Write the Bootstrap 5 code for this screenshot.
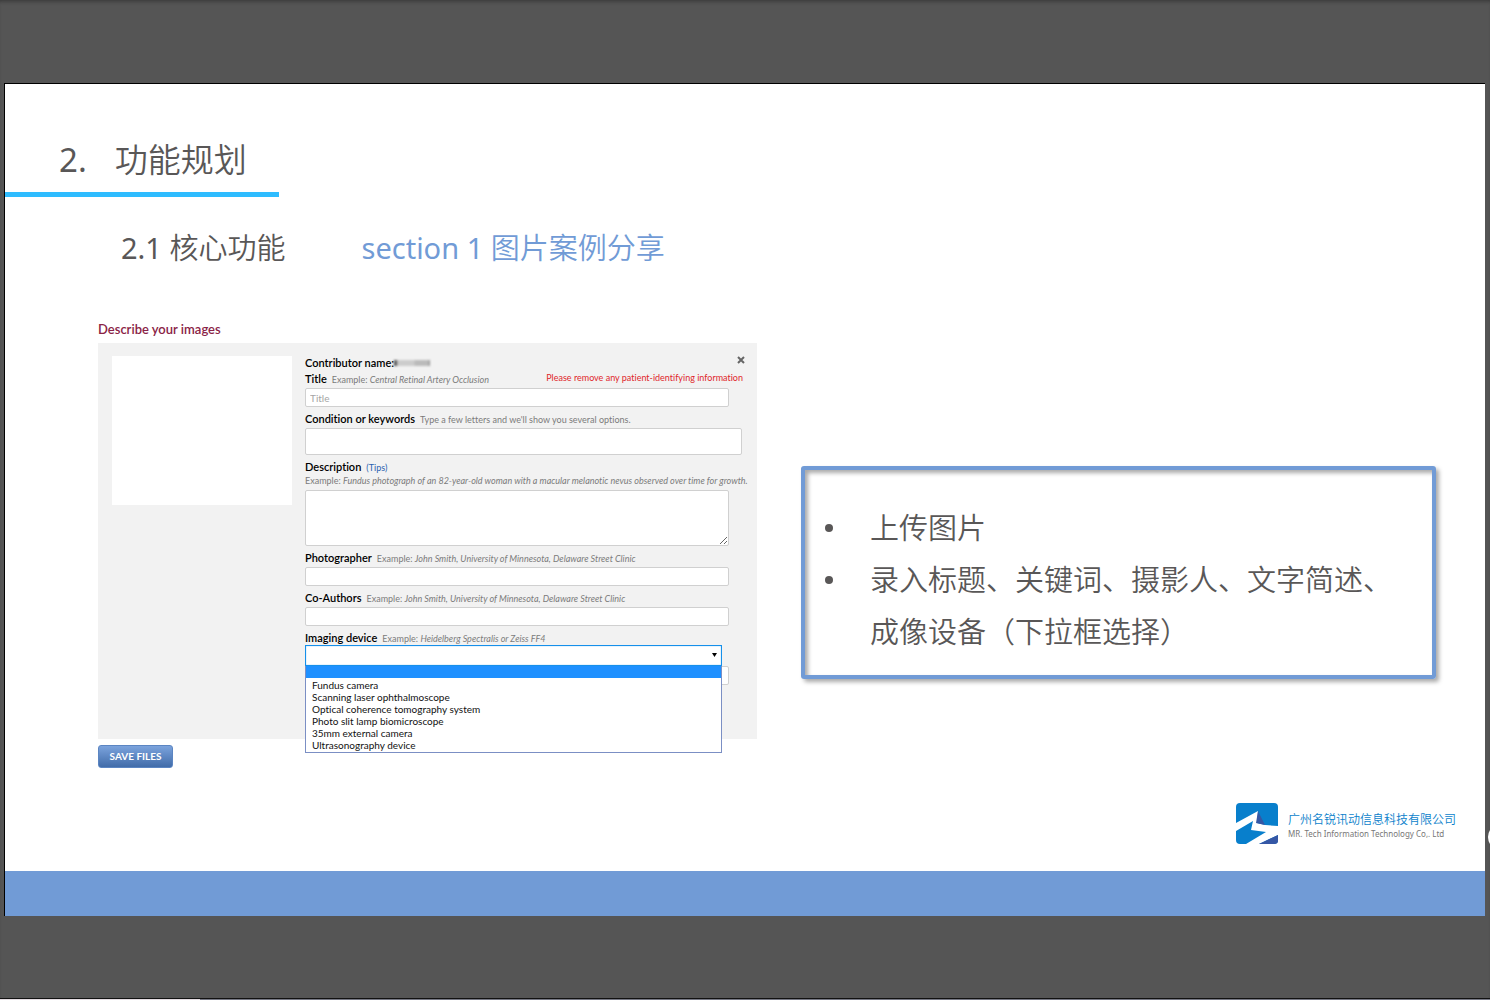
<!DOCTYPE html>
<html lang="zh-CN">
<head>
<meta charset="utf-8">
<meta name="viewport" content="width=device-width, initial-scale=1">
<title>功能规划</title>
<link rel="stylesheet" href="https://cdn.jsdelivr.net/npm/bootstrap@5.3.0/dist/css/bootstrap.min.css">
<style>
  body { background: #555; color: #595757; font-family: "Noto Sans", "Noto Sans CJK SC", sans-serif; font-weight: 350; box-shadow: inset 0 4px 4px -3px #333; }
  .stage { padding: 83px 5px 0 4px; }
  .slide { background: #fff; border-left: 1px solid #000; border-top: 1px solid #000; }
  .slide-head { padding-top: 52px; }
  .slide-title { display: inline-flex; gap: 28px; width: 274px; padding-left: 54px; border-bottom: 5px solid #2ebcff; font-size: 33px; line-height: 48px; padding-bottom: 8px; font-weight: 350; }
  .slide-sub { gap: 76px; padding: 29px 0 0 116px; }
  .slide-sub h2 { font-size: 29px; line-height: 44px; font-weight: 350; }
  .latin { font-weight: 400; }
  .tone-blue { color: #719bd6; }
  .content-row { gap: 44px; padding: 50px 49px 0 93px; }
  .upload { flex: 0 1 659px; min-width: 0; font-family: Lato, sans-serif; font-weight: 400; font-variant-ligatures: none; }
  .upload-title { color: #8a2346; font-size: 13px; line-height: 18px; font-weight: 600; padding-bottom: 5px; }
  .upload-panel { background: #f2f2f2; height: 396px; padding: 13px 14px 0 14px; gap: 13px; }
  .thumb { width: 180px; height: 149px; flex: none; }
  .fields { flex: 1 1 0; min-width: 0; font-size: 9px; line-height: 14px; color: #7b7b7b; }
  .fields label, .who { font-size: 11px; font-weight: 600; color: #000; margin-right: 5px; }
  .field-line { display: flex; align-items: baseline; height: 14px; white-space: nowrap; margin-top: 5px; }
  .field-line.tight { margin-top: 0; }
  .field-line.near { margin-top: 2px; }
  .box { border: 1px solid #d0d0d0; border-radius: 2px; font-size: 10px; line-height: 14px; padding: 0 4px; display: block; height: 19px; width: calc(100% - 14px); margin-top: 2px; }
  .box::placeholder { color: #a5a5a5; }
  .box-wide { width: calc(100% - 1px); height: 27px; }
  .box-area { height: 56px; resize: vertical; }
  .masked { width: 36px; height: 6px; background: linear-gradient(90deg, #555 0 2px, #ccc 4px 20px, #bbb 21px 34px, #888); filter: blur(1px); }
  .tips { color: #2a62b0; }
  .warn { color: #e0262b; line-height: 12px; align-self: flex-start; }
  .shut { border: 0; background: none; padding: 0; width: 8px; height: 8px; display: flex; margin-right: -2px; }
  .picker { position: relative; height: 40px; }
  .picker select { appearance: none; display: block; width: calc(100% - 21px); height: 21px; border: 1px solid #1690ea; box-shadow: inset 0 0 1px #1690ea; outline: 0; background: #fff; border-radius: 0; padding: 0 6px; font-size: 10px; }
  .picker .box { margin-top: 0; }
  .picker .caret { position: absolute; right: 26px; top: 8px; }
  .options { position: absolute; z-index: 2; top: 21px; left: 0; width: calc(100% - 21px); background: #fff; border: 1px solid #7b8fc4; border-top: 0; color: #111; font-size: 10px; line-height: 12px; padding-bottom: 1px; }
  .options li { padding-left: 6px; height: 12px; }
  .options li:first-child { background: #1e90ff; margin-bottom: 1px; }
  .save { border: 1px solid #5b85c2; border-radius: 3px; background: linear-gradient(#7ba3dd, #416ca9); color: #fff; font-size: 10px; font-weight: 700; line-height: 21px; padding: 0; width: 75px; margin-top: 6px; }
  .notes { flex: 1 1 0; min-width: 0; margin-top: 146px; border: 4px solid #719bd6; border-radius: 3px; height: 213px; box-shadow: 3px 3px 4px #aaa, inset 3px 3px 4px #aaa; padding: 32px 20px 0; font-size: 29px; line-height: 52px; }
  .notes li { display: flex; gap: 37px; }
  .notes li::before { content: ""; flex: none; width: 8px; height: 8px; border-radius: 50%; background: #595757; margin-top: 22px; }
  .brand { gap: 10px; padding: 35px 29px 26px 0; }
  .brand-cn { color: #0b7fcb; font-size: 12px; line-height: 16px; padding-top: 3px; }
  .brand-en { font-size: 8px; line-height: 12px; font-weight: 400; color: #777; }
  .foot { height: 45px; background: #719bd6; }
  .taskbar { height: 2px; border-top: 1px solid #111; background: linear-gradient(90deg, #e4dde2 200px, #777985 200px); }
  .edge-knob { position: absolute; z-index: 3; left: calc(100% - 2px); top: 824px; width: 26px; height: 26px; border-radius: 50%; background: #fff; }
</style>
<script src="https://cdn.jsdelivr.net/npm/bootstrap@5.3.0/dist/js/bootstrap.bundle.min.js"></script>
</head>
<body class="d-flex flex-column min-vh-100 overflow-x-hidden position-relative">
<main class="stage">
  <article class="slide">
    <header class="slide-head">
      <h1 class="slide-title m-0"><span class="latin">2.</span><span>功能规划</span></h1>
      <div class="slide-sub d-flex">
        <h2 class="m-0"><span class="latin">2.1</span> 核心功能</h2>
        <h2 class="m-0 tone-blue"><span class="latin">section 1</span> 图片案例分享</h2>
      </div>
    </header>
    <div class="content-row d-flex align-items-start">
      <form class="upload">
        <h3 class="upload-title m-0">Describe your images</h3>
        <div class="upload-panel d-flex">
          <div class="thumb bg-white"></div>
          <div class="fields">
            <div class="field-line tight"><span class="who m-0">Contributor name:</span><span class="masked align-self-center"></span>
              <button type="button" class="shut ms-auto align-self-start" aria-label="Close"><svg width="8" height="8" viewBox="0 0 8 8"><path d="M1 1l6 6M7 1L1 7" stroke="#666" stroke-width="2"/></svg></button></div>
            <div class="field-line near"><label for="t">Title</label><span>Example: <em>Central Retinal Artery Occlusion</em></span><span class="warn ms-auto">Please remove any patient-identifying information</span></div>
            <input id="t" class="box" placeholder="Title">
            <div class="field-line"><label for="k">Condition or keywords</label><span>Type a few letters and we'll show you several options.</span></div>
            <input id="k" class="box box-wide">
            <div class="field-line"><label for="d">Description</label><a href="#tips" class="tips text-decoration-none">(Tips)</a></div>
            <div class="field-line tight">Example:&nbsp;<em>Fundus photograph of an 82-year-old woman with a macular melanotic nevus observed over time for growth.</em></div>
            <textarea id="d" class="box box-area"></textarea>
            <div class="field-line"><label for="p">Photographer</label><span>Example: <em>John Smith, University of Minnesota, Delaware Street Clinic</em></span></div>
            <input id="p" class="box">
            <div class="field-line"><label for="c">Co-Authors</label><span>Example: <em>John Smith, University of Minnesota, Delaware Street Clinic</em></span></div>
            <input id="c" class="box">
            <div class="field-line"><label for="i">Imaging device</label><span>Example: <em>Heidelberg Spectralis or Zeiss FF4</em></span></div>
            <div class="picker">
              <select id="i"><option></option></select>
              <svg class="caret" width="5" height="4" viewBox="0 0 5 4"><path d="M0 0h5L2.500 4z"/></svg>
              <input class="box" aria-label="Details">
              <ul class="options list-unstyled m-0" role="listbox" aria-label="Imaging device">
                <li role="option" aria-selected="true"></li><li role="option">Fundus camera</li><li role="option">Scanning laser ophthalmoscope</li><li role="option">Optical coherence tomography system</li><li role="option">Photo slit lamp biomicroscope</li><li role="option">35mm external camera</li><li role="option">Ultrasonography device</li>
              </ul>
            </div>
          </div>
        </div>
        <button type="button" class="save">SAVE FILES</button>
      </form>
      <ul class="notes list-unstyled mb-0">
        <li>上传图片</li>
        <li>录入标题、关键词、摄影人、文字简述、成像设备（下拉框选择）</li>
      </ul>
    </div>
    <div class="brand d-flex justify-content-end align-items-center">
      <svg width="42" height="42" viewBox="0 0 42 42"><rect width="42" height="41" rx="4" fill="#087fcc"/><path d="M0 20L22 8 21 20 29 22 42 23V32L23 41H10L30 29 15 27 17 18 0 28z" fill="#fff"/><path d="M22 8L29 22 20 20z M42 32V38Q42 41 38 41H23z" fill="#3557a5"/></svg>
      <div><div class="brand-cn">广州名锐讯动信息科技有限公司</div><div class="brand-en">MR. Tech Information Technology Co,. Ltd</div></div>
    </div>
    <div class="foot"></div>
  </article>
</main>
<span class="edge-knob"></span>
<div class="taskbar mt-auto"></div>
</body>
</html>
